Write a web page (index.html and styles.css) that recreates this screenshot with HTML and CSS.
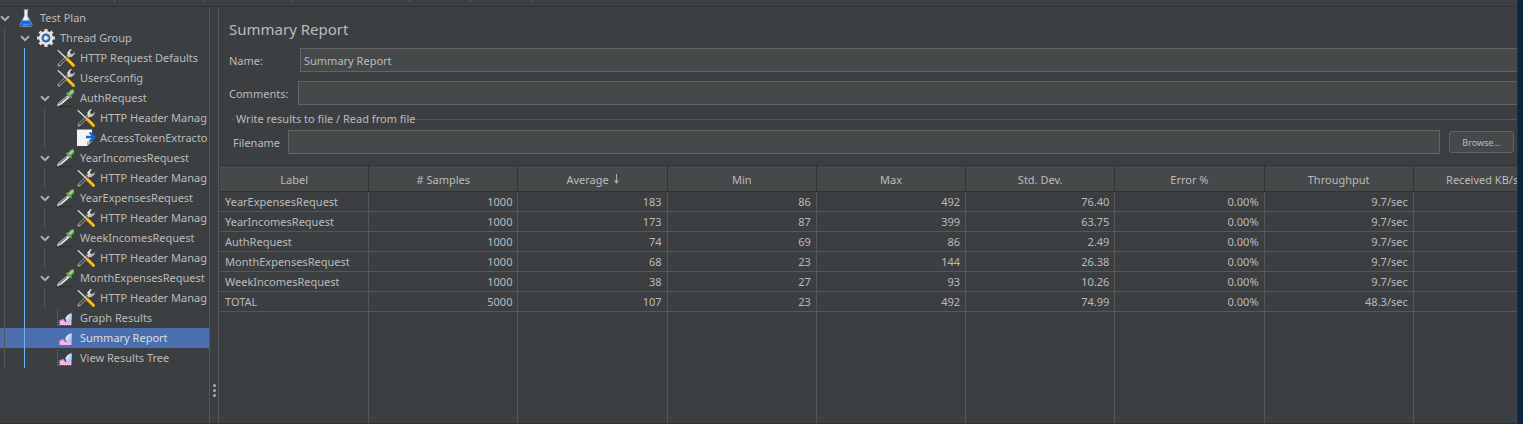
FILE: index.html
```html
<!DOCTYPE html>
<html lang="en">
<head>
<meta charset="utf-8">
<title>Summary Report</title>
<link rel="stylesheet" href="styles.css">
</head>
<body>
<svg class="defs" aria-hidden="true">
  <defs>
    <linearGradient id="steel" x1="0" y1="0" x2="1" y2="1"><stop offset="0" stop-color="#fff"/><stop offset="1" stop-color="#9a9a9a"/></linearGradient>
    <linearGradient id="lens" x1="0" y1="0" x2="1" y2="1"><stop offset="0" stop-color="#ffffff"/><stop offset="1" stop-color="#7fb4f0"/></linearGradient>
    <linearGradient id="glass" x1="0" y1="0" x2="1" y2="0"><stop offset="0" stop-color="#8fa0b0"/><stop offset=".4" stop-color="#ffffff"/><stop offset="1" stop-color="#93a5b8"/></linearGradient>
  </defs>
  <symbol id="chevron" viewBox="0 0 10 7"><path d="M1 1.200 5 5.200 9 1.200" fill="none" stroke="#adadad" stroke-width="2"/></symbol>
  <symbol id="flask" viewBox="0 0 20 20">
    <path d="M7.500 1.500h5M8.500 2h3v6l4.500 8.500q.5 1.700-1 1.700H5q-1.500 0-1-1.700L8.500 8z" fill="url(#glass)" stroke="#aebccb" stroke-width=".6"/>
    <path d="M6.500 12h7l2.300 4.500q.5 1.500-1 1.500H5.200q-1.500 0-1-1.500z" fill="#1164dc"/>
    <path d="M6.500 12.300q3.500 1 7 0" fill="none" stroke="#79b6ff" stroke-width="1"/>
    <path d="M7 16q3 1.200 6 0" fill="none" stroke="#3f97ff" stroke-width="1.500"/>
  </symbol>
  <symbol id="gear" viewBox="0 0 20 20">
    <g stroke="#dcdcdc" stroke-width="3.200"><path d="M10 1v18M1 10h18M3.600 3.600l12.800 12.800M16.400 3.600 3.600 16.400"/></g>
    <circle cx="10" cy="10" r="7" fill="#e9e9e9"/>
    <circle cx="10" cy="10" r="4.700" fill="#8c9db4"/>
    <circle cx="10" cy="10" r="4" fill="#27509a"/>
    <circle cx="10" cy="10" r="2.800" fill="#7fa9e2"/>
    <path d="M8.600 7.800 12.300 10l-3.700 2.200z" fill="#fff"/>
  </symbol>
  <symbol id="tools" viewBox="0 0 20 20">
    <path d="M3 17 13 7" stroke="#a8a8a8" stroke-width="3" stroke-linecap="round"/>
    <path d="M3.200 16.800 11.500 8.500" stroke="#36393b" stroke-width="1.600"/>
    <path d="M12 8.200 11.300 4.500 14.200 1.300 16 1.200 14 3.700l.4 2 2.100.4 2.300-2-.2 2.200-2.800 2.600-3.200.3z" fill="url(#steel)"/>
    <path d="M1.200 2.500 2.500 2 12 11l-1 1z" fill="#dedede"/>
    <path d="m11.500 11.500 6 6" stroke="#f2b705" stroke-width="3" stroke-linecap="round"/>
    <path d="m12 11.200 5.500 5.500" stroke="#ffe15a" stroke-width=".9"/>
  </symbol>
  <symbol id="dropper" viewBox="0 0 20 20">
    <path d="M3 18.700h13" stroke="#2a2c2e"/>
    <path d="m.8 17.500 2-3 8.700-7.300 2.200 2.200-8.200 7.100-3.200 1.500z" fill="#cfcfcf"/>
    <path d="m3.200 15.700 7.600-6.500" stroke="#55595c" stroke-width="1"/>
    <path d="m5.500 15.500 7.200-6.300" stroke="#fff" stroke-width=".9"/>
    <path d="m10 5.500 4.700 5 1.300-1.200-.8-1.700 2.600-2.200Q19 2 17 1.200q-2-.4-3.300 1.600l-1 1.700-1.400-.2z" fill="#65ad52"/>
    <path d="M13.800 5.700 16.500 3" stroke="#a9dc92" stroke-width="1.600" stroke-linecap="round"/>
  </symbol>
  <symbol id="extract" viewBox="0 0 20 20">
    <path d="M1 1.500h15v11.500L11 18H1z" fill="#f4f4f4"/>
    <path d="M16 13 11 18v-4.500z" fill="#b4b8bb"/>
    <path d="M10 9h8M13.700 4.500 18.200 9l-4.500 4.500" fill="none" stroke="#1767c9" stroke-width="2.400"/>
  </symbol>
  <symbol id="graph" viewBox="0 0 20 20">
    <path d="M1.500 2v16M2 17.500h14.500" stroke="#777" stroke-dasharray="1 1"/>
    <path d="M3.500 17v-4.500L7 11l2.500 3 3.500-2 2.500 1v4z" fill="#f5b6ee"/>
    <path d="M3.500 13 7 11.500 9.500 14.200 13 12.500" fill="none" stroke="#dc74cf"/>
    <path d="M15.800 5.300v7.200L12.500 14.500Q9.300 13 9.300 10.500 11.500 5.700 15.800 5.300z" fill="url(#lens)"/>
  </symbol>
</svg>

<div class="app">
  <div class="toolbar" aria-hidden="true"><i></i><i></i><i></i><i></i><i></i><i></i></div>
  <div class="workspace">
    <nav class="sidebar" aria-label="Test plan">
      <ul class="tree">
        <li>
          <div class="node"><svg class="chevron"><use href="#chevron"/></svg><svg class="icon"><use href="#flask"/></svg><span>Test Plan</span></div>
          <ul>
            <li>
              <div class="node"><svg class="chevron"><use href="#chevron"/></svg><svg class="icon"><use href="#gear"/></svg><span>Thread Group</span></div>
              <ul class="active">
                <li><div class="node leaf"><svg class="icon"><use href="#tools"/></svg><span>HTTP Request Defaults</span></div></li>
                <li><div class="node leaf"><svg class="icon"><use href="#tools"/></svg><span>UsersConfig</span></div></li>
                <li>
                  <div class="node"><svg class="chevron"><use href="#chevron"/></svg><svg class="icon"><use href="#dropper"/></svg><span>AuthRequest</span></div>
                  <ul>
                    <li><div class="node leaf"><svg class="icon"><use href="#tools"/></svg><span>HTTP Header Manag</span></div></li>
                    <li><div class="node leaf"><svg class="icon"><use href="#extract"/></svg><span>AccessTokenExtracto</span></div></li>
                  </ul>
                </li>
                <li>
                  <div class="node"><svg class="chevron"><use href="#chevron"/></svg><svg class="icon"><use href="#dropper"/></svg><span>YearIncomesRequest</span></div>
                  <ul><li><div class="node leaf"><svg class="icon"><use href="#tools"/></svg><span>HTTP Header Manag</span></div></li></ul>
                </li>
                <li>
                  <div class="node"><svg class="chevron"><use href="#chevron"/></svg><svg class="icon"><use href="#dropper"/></svg><span>YearExpensesRequest</span></div>
                  <ul><li><div class="node leaf"><svg class="icon"><use href="#tools"/></svg><span>HTTP Header Manag</span></div></li></ul>
                </li>
                <li>
                  <div class="node"><svg class="chevron"><use href="#chevron"/></svg><svg class="icon"><use href="#dropper"/></svg><span>WeekIncomesRequest</span></div>
                  <ul><li><div class="node leaf"><svg class="icon"><use href="#tools"/></svg><span>HTTP Header Manag</span></div></li></ul>
                </li>
                <li>
                  <div class="node"><svg class="chevron"><use href="#chevron"/></svg><svg class="icon"><use href="#dropper"/></svg><span>MonthExpensesRequest</span></div>
                  <ul><li><div class="node leaf"><svg class="icon"><use href="#tools"/></svg><span>HTTP Header Manag</span></div></li></ul>
                </li>
                <li><div class="node leaf"><svg class="icon"><use href="#graph"/></svg><span>Graph Results</span></div></li>
                <li><div class="node leaf selected"><svg class="icon"><use href="#graph"/></svg><span>Summary Report</span></div></li>
                <li><div class="node leaf"><svg class="icon"><use href="#graph"/></svg><span>View Results Tree</span></div></li>
              </ul>
            </li>
          </ul>
        </li>
      </ul>
    </nav>
    <div class="splitter" aria-hidden="true"><i></i><i></i><i></i></div>
    <main class="report">
      <h1>Summary Report</h1>
      <div class="field name"><label for="name">Name:</label><input id="name" type="text" value="Summary Report"></div>
      <div class="field comments"><label for="comments">Comments:</label><input id="comments" type="text"></div>
      <fieldset>
        <legend>Write results to file / Read from file</legend>
        <div class="file"><label for="file">Filename</label><input id="file" type="text"><button type="button">Browse...</button></div>
      </fieldset>
      <div class="results">
        <table>
          <thead><tr><th>Label</th><th># Samples</th><th>Average <svg class="sort" viewBox="0 0 5 10"><path d="M2.500 0v9" stroke="#adadad"/><path d="M0 6.500h5L2.500 10z" fill="#adadad"/></svg></th><th>Min</th><th>Max</th><th>Std. Dev.</th><th>Error %</th><th>Throughput</th><th>Received KB/sec</th></tr></thead>
          <tbody>
            <tr><td>YearExpensesRequest</td><td>1000</td><td>183</td><td>86</td><td>492</td><td>76.40</td><td>0.00%</td><td>9.7/sec</td><td></td></tr>
            <tr><td>YearIncomesRequest</td><td>1000</td><td>173</td><td>87</td><td>399</td><td>63.75</td><td>0.00%</td><td>9.7/sec</td><td></td></tr>
            <tr><td>AuthRequest</td><td>1000</td><td>74</td><td>69</td><td>86</td><td>2.49</td><td>0.00%</td><td>9.7/sec</td><td></td></tr>
            <tr><td>MonthExpensesRequest</td><td>1000</td><td>68</td><td>23</td><td>144</td><td>26.38</td><td>0.00%</td><td>9.7/sec</td><td></td></tr>
            <tr><td>WeekIncomesRequest</td><td>1000</td><td>38</td><td>27</td><td>93</td><td>10.26</td><td>0.00%</td><td>9.7/sec</td><td></td></tr>
            <tr><td>TOTAL</td><td>5000</td><td>107</td><td>23</td><td>492</td><td>74.99</td><td>0.00%</td><td>48.3/sec</td><td></td></tr>
            <tr class="filler"><td></td><td></td><td></td><td></td><td></td><td></td><td></td><td></td><td></td></tr>
          </tbody>
        </table>
      </div>
    </main>
  </div>
</div>
</body>
</html>
```
FILE: styles.css
```css
* { box-sizing: border-box; }

body {
  margin: 0;
  height: 100vh;
  padding-right: 5px;
  background: #0b2540;
  color: #bbbbbb;
  font: 11px/20px "Noto Sans", "Open Sans", sans-serif;
}

.defs { position: absolute; width: 0; height: 0; }

.app {
  display: flex;
  flex-direction: column;
  height: 100%;
  overflow: hidden;
  background: #3c3f41;
  border-right: 1px solid #2b2f32;
  border-bottom: 1px solid #2f3032;
}

.toolbar {
  display: flex;
  height: 7px;
  padding-left: 114px;
  border-bottom: 1px solid #323232;
}
.toolbar i { width: 1px; height: 2px; margin-right: 88px; background: #5b5e60; }
.toolbar i:nth-child(3) { margin-right: 116px; }
.toolbar i:nth-child(n + 4) { margin-right: 60px; }

.workspace { display: flex; flex: 1; min-height: 0; }

.sidebar {
  width: 210px;
  flex: none;
  overflow: hidden;
  isolation: isolate;
  border-right: 1px solid #555759;
}

ul { margin: 0; padding: 0; list-style: none; }
.tree { width: 100%; padding-top: 1px; }
.tree ul { margin-left: 4px; padding-left: 15px; border-left: 1px solid #555759; }
.tree ul.active { border-color: #6bb4f5; }

.node { display: flex; align-items: center; height: 20px; white-space: nowrap; }
.node.leaf { padding-left: 16px; }
.chevron { width: 10px; height: 7px; margin-right: 6px; flex: none; }
.icon { width: 20px; height: 20px; margin-right: 4px; flex: none; }

/* The highlight spans the whole row, beneath the indent guides. */
.selected { position: relative; color: #dddddd; }
.selected::before {
  content: "";
  position: absolute;
  inset: 0 0 0 -40px;
  z-index: -1;
  background: #4b6eaf;
}

.splitter {
  display: flex;
  flex-direction: column;
  align-items: center;
  justify-content: flex-end;
  gap: 2px;
  width: 8px;
  padding-bottom: 26px;
  flex: none;
}
.splitter i { width: 3px; height: 3px; border-radius: 50%; background: #adadad; }

.report {
  display: flex;
  flex-direction: column;
  flex: 1;
  min-width: 0;
  border-left: 1px solid #555759;
}

h1 { margin: 12px 0 8px 10px; font-size: 15px; font-weight: 400; line-height: 21px; }

input {
  flex: 1;
  min-width: 0;
  height: 24px;
  padding: 0 3px;
  border: 1px solid #646464;
  background: #45494a;
  color: #bbbbbb;
  font: inherit;
}

.field { display: flex; align-items: center; padding-left: 10px; margin-bottom: 9px; }
.field input { border-right: 0; }
.name label { width: 71px; }
.comments label { width: 69px; }
.comments { margin-bottom: 4px; }
.field label { padding-top: 2px; }

fieldset { min-width: 0; margin: 0 0 11px 12px; padding: 0; border: 0; border-top: 1px solid #555759; }
legend { margin-left: 3px; padding: 0 2px; }
.file { display: flex; align-items: center; padding: 1px 3px 0 2px; }
.file label { width: 55px; padding-top: 2px; }

button {
  width: 65px;
  height: 22px;
  margin-left: 9px;
  padding: 0;
  border: 1px solid #646464;
  border-radius: 3px;
  background: #45494a;
  color: #bbbbbb;
  font: 9px "Noto Sans", "Open Sans", sans-serif;
}

.results { flex: 1; min-height: 0; padding-left: 1px; overflow: hidden; }

table {
  width: calc(100% + 46px);
  height: 100%;
  table-layout: fixed;
  border-collapse: separate;
  border-spacing: 0;
}
th {
  height: 27px;
  padding: 2px 0 0;
  border: solid #323232;
  border-width: 1px 1px 1px 0;
  background: #45494a;
  font-weight: 400;
}
td {
  height: 20px;
  padding: 0 5px;
  border: solid #555759;
  border-width: 0 1px 1px 0;
  line-height: 19px;
  text-align: right;
}
td:first-child { text-align: left; }
.filler td { height: auto; border-bottom: 0; }
.sort { width: 5px; height: 10px; margin-left: 2px; }
```
